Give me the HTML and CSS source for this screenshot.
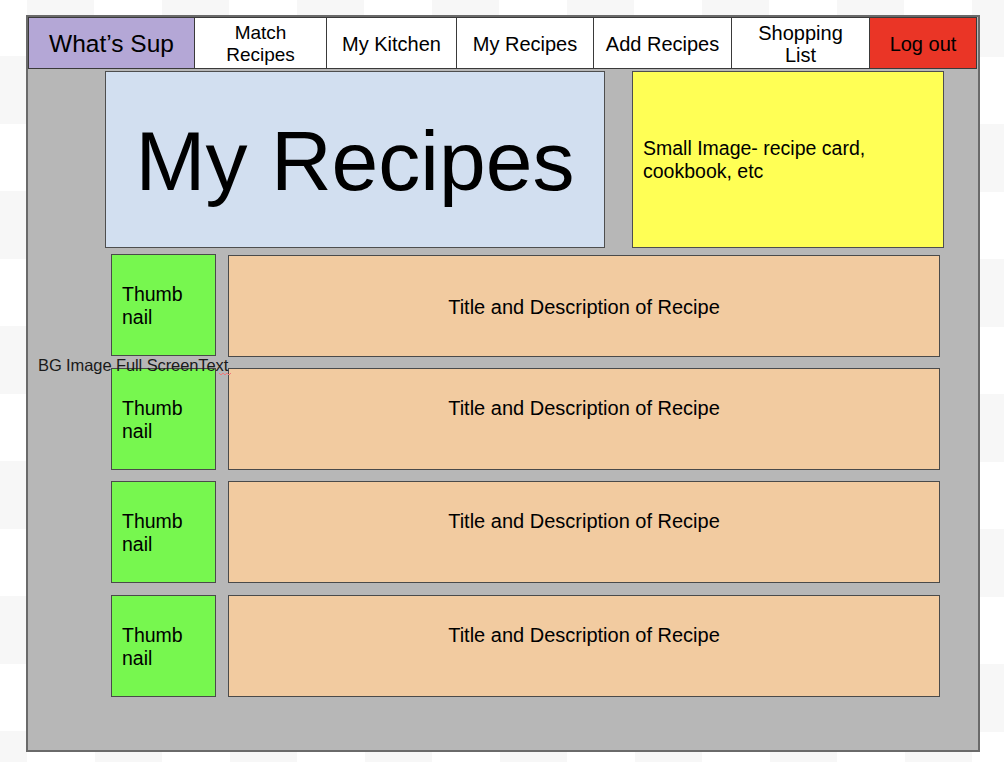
FILE: index.html
```html
<!DOCTYPE html>
<html lang="en">
<head>
<meta charset="utf-8">
<title>What’s Sup – My Recipes</title>
<link rel="stylesheet" href="styles.css">
</head>
<body>
<div class="frame">
  <nav class="nav">
    <div class="nav-item brand">What’s Sup</div>
    <div class="nav-item w-match">Match<br>Recipes</div>
    <div class="nav-item w-kitchen">My Kitchen</div>
    <div class="nav-item w-recipes">My Recipes</div>
    <div class="nav-item w-add">Add Recipes</div>
    <div class="nav-item w-shop">Shopping<br>List</div>
    <div class="nav-item logout">Log out</div>
  </nav>
  <section class="top">
    <div class="hero"><h1 class="hero-title">My Recipes</h1></div>
    <div class="small-image">Small Image- recipe card,<br>cookbook, etc</div>
  </section>
  <section class="list">
    <div class="row">
      <div class="thumb">Thumb<br>nail</div>
      <div class="desc desc-first">Title and Description of Recipe</div>
    </div>
    <div class="row">
      <div class="thumb">Thumb<br>nail</div>
      <div class="desc">Title and Description of Recipe</div>
    </div>
    <div class="row">
      <div class="thumb">Thumb<br>nail</div>
      <div class="desc">Title and Description of Recipe</div>
    </div>
    <div class="row">
      <div class="thumb">Thumb<br>nail</div>
      <div class="desc">Title and Description of Recipe</div>
    </div>
  </section>
  <div class="bg-label">BG Image Full ScreenText</div>
  <svg class="squiggle" width="12" height="4" viewBox="0 0 12 4"><path d="M0 1 L2 3 L4 1 L6 3 L8 1 L10 3 L12 1" fill="none" stroke="#f07a7a" stroke-width="1"/></svg>
</div>
</body>
</html>
```

FILE: styles.css
```css
* { box-sizing: border-box; }

html, body {
  margin: 0;
  padding: 0;
}

body {
  width: 1004px;
  height: 762px;
  overflow: hidden;
  font-family: "Liberation Sans", Arial, sans-serif;
  color: #000;
  background: repeating-conic-gradient(#ffffff 0 25%, #f7f7f7 0 50%) 27px -11px / 135px 135px;
}

.frame {
  position: relative;
  margin: 15px 0 0 26px;
  width: 954px;
  height: 737px;
  border: 2px solid #6a6a6a;
  background: #b7b7b7;
}

.nav {
  display: flex;
  height: 52px;
  border-top: 1px solid #3a3a3a;
  border-bottom: 1px solid #3a3a3a;
  width: 949px;
}

.nav-item {
  display: flex;
  align-items: center;
  justify-content: center;
  text-align: center;
  font-size: 20px;
  line-height: 22px;
  background: #ffffff;
  border-right: 1px solid #3a3a3a;
  padding-top: 1px;
}

.brand {
  width: 167px;
  background: #b4a7d6;
  font-size: 24.5px;
  border-left: 1px solid #3a3a3a;
}
.w-match { width: 132px; font-size: 19px; }
.w-kitchen { width: 130px; }
.w-recipes { width: 137px; }
.w-add { width: 138px; }
.w-shop { width: 138px; }
.logout { width: 107px; background: #ea3526; }

.top {
  display: flex;
  gap: 27px;
  margin-top: 2px;
  padding-left: 77px;
  height: 177px;
}

.hero {
  width: 500px;
  height: 177px;
  background: #d2dff0;
  border: 1px solid #4e4e4e;
  display: flex;
  align-items: center;
  justify-content: center;
}

.hero-title {
  margin: 0;
  font-weight: normal;
  font-size: 84px;
  line-height: 1;
  color: #000;
  padding-top: 2px;
}

.small-image {
  width: 312px;
  height: 177px;
  background: #ffff55;
  border: 1px solid #4e4e4e;
  display: flex;
  align-items: center;
  padding: 1px 0 0 10px;
  font-size: 19.5px;
  line-height: 23px;
}

.list {
  display: flex;
  flex-direction: column;
  gap: 11.5px;
  margin-top: 6px;
  padding-left: 83px;
}

.row {
  display: flex;
  gap: 12px;
  height: 102px;
}

.thumb {
  width: 105px;
  height: 102px;
  background: #77f74f;
  border: 1px solid #4a4a4a;
  display: flex;
  align-items: center;
  padding: 2px 0 0 10px;
  font-size: 19.5px;
  line-height: 23px;
}

.desc {
  width: 712px;
  height: 102px;
  background: #f2cba0;
  border: 1px solid #4a4a4a;
  text-align: center;
  font-size: 20px;
  line-height: 23px;
  padding-top: 28px;
}

.desc-first {
  margin-top: 1px;
  padding-top: 40px;
}

.bg-label {
  position: absolute;
  left: 10px;
  top: 338px;
  font-size: 16.5px;
  line-height: 20px;
  color: #1a1a1a;
  white-space: nowrap;
  letter-spacing: -0.1px;
}

.squiggle {
  position: absolute;
  left: 191px;
  top: 355px;
}
```
